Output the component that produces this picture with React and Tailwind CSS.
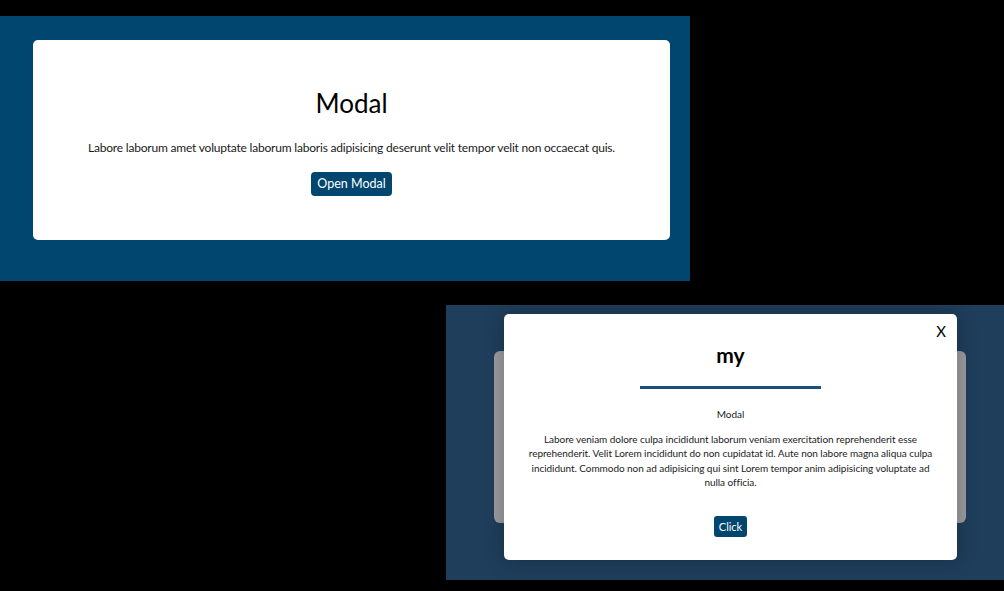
export default function App() {
  const font = { fontFamily: 'Lato, "Noto Sans", sans-serif' };
  return (
    <div className="w-[1004px] h-[591px] bg-black overflow-hidden flex flex-col" style={font}>
      <div className="mt-[16px] w-[690px] h-[265px] bg-[#00466e] pt-[24px] pl-[33px]">
        <div className="w-[637px] h-[200px] bg-white rounded-[5px] flex flex-col items-center pt-[46px]">
          <h1 className="text-[26px] leading-[34px] text-black">Modal</h1>
          <p className="mt-[20px] text-[12px] leading-[16px] text-[#1a1a1a] tracking-[-0.2px]">
            Labore laborum amet voluptate laborum laboris adipisicing deserunt velit tempor velit non occaecat quis.
          </p>
          <button className="mt-[16px] h-[24px] px-[6px] bg-[#00466e] text-white text-[12.5px] rounded-[4px] leading-[24px]">
            Open Modal
          </button>
        </div>
      </div>
      <div className="mt-[24px] flex justify-end">
        <div className="relative w-[558px] h-[275px] bg-[#1f3e5b]">
          <div className="ml-[48px] mt-[46px] w-[472px] h-[172px] bg-[#9b9a9e] rounded-[6px]" />
          <div className="absolute left-[58px] top-[9px] w-[453px] h-[246px] bg-white rounded-[5px] shadow-[0_0_20px_rgba(0,0,0,0.25)] flex flex-col items-center pt-[28px] px-[24px] text-[#222]">
            <span className="absolute right-[11px] top-[7px] text-[15px] leading-[20px] text-black">X</span>
            <h2 className="text-[21px] leading-[26px] font-bold text-black">my</h2>
            <div className="mt-[18px] w-[181px] h-[3px] bg-[#1b4f7e]" />
            <p className="mt-[18px] text-[10px] leading-[14px]">Modal</p>
            <p className="mt-[11px] text-[10px] leading-[14.3px] text-center tracking-[-0.05px]">
              Labore veniam dolore culpa incididunt laborum veniam exercitation reprehenderit esse reprehenderit. Velit Lorem incididunt do non cupidatat id. Aute non labore magna aliqua culpa incididunt. Commodo non ad adipisicing qui sint Lorem tempor anim adipisicing voluptate ad nulla officia.
            </p>
            <button className="mt-[27px] h-[21px] px-[5px] bg-[#00466e] text-white text-[11px] rounded-[3px] leading-[21px]">
              Click
            </button>
          </div>
        </div>
      </div>
    </div>
  );
}
